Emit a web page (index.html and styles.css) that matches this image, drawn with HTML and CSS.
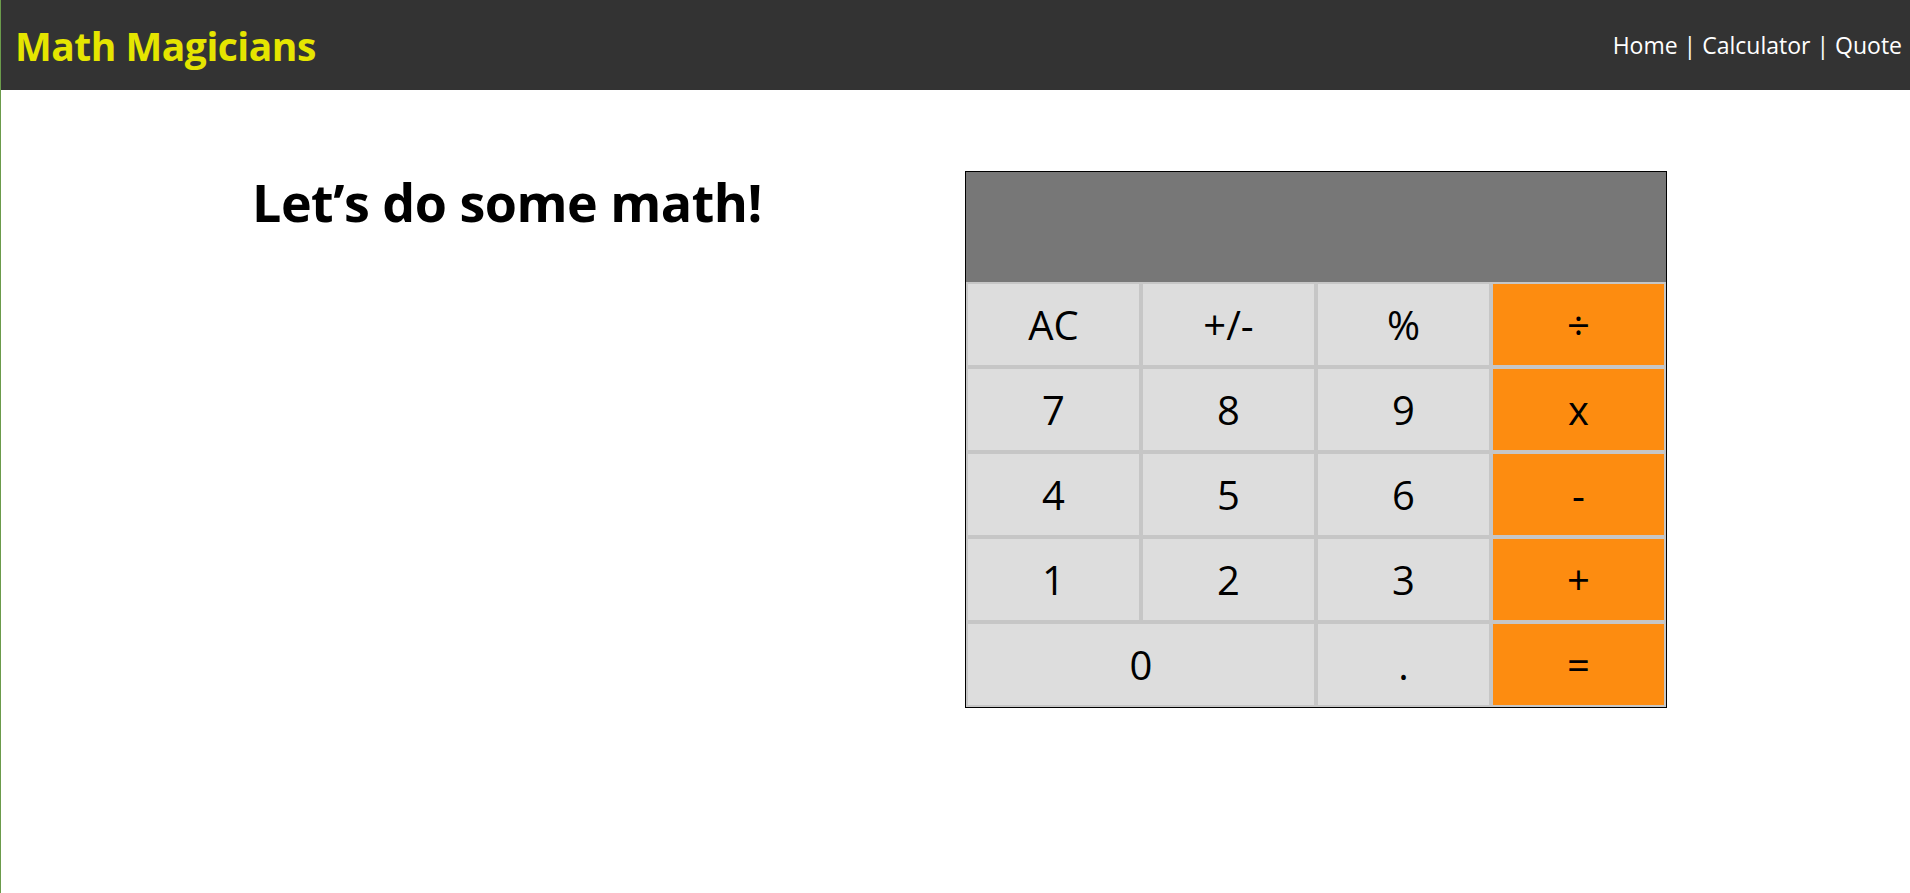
FILE: index.html
```html
<!DOCTYPE html>
<html lang="en">
<head>
<meta charset="utf-8">
<title>Math Magicians</title>
<link rel="stylesheet" href="styles.css">
</head>
<body>
<div class="app">
  <header class="topbar">
    <h1 class="brand">Math Magicians</h1>
    <nav class="nav">
      <a href="#" class="nav-link">Home</a> | <a href="#" class="nav-link">Calculator</a> | <a href="#" class="nav-link">Quote</a>
    </nav>
  </header>
  <main class="page">
    <h2 class="title">Let’s do some math!</h2>
    <div class="calc">
      <div class="display"></div>
      <div class="keys">
        <button class="key">AC</button>
        <button class="key">+/-</button>
        <button class="key">%</button>
        <button class="key op">÷</button>
        <button class="key">7</button>
        <button class="key">8</button>
        <button class="key">9</button>
        <button class="key op">x</button>
        <button class="key">4</button>
        <button class="key">5</button>
        <button class="key">6</button>
        <button class="key op">-</button>
        <button class="key">1</button>
        <button class="key">2</button>
        <button class="key">3</button>
        <button class="key op">+</button>
        <button class="key zero">0</button>
        <button class="key">.</button>
        <button class="key op">=</button>
      </div>
    </div>
  </main>
</div>
</body>
</html>
```
FILE: styles.css
```css
* { box-sizing: border-box; }
html, body { margin: 0; padding: 0; background: #fff; }
body { font-family: "Open Sans", "Noto Sans", sans-serif; }

.app {
  min-height: 100vh;
  border-left: 1px solid #6b9b4b;
}

.topbar {
  height: 90px;
  background: #333333;
  display: flex;
  align-items: center;
  justify-content: space-between;
  padding: 0 8px 0 14px;
}

.brand {
  margin: 0;
  color: #e5e500;
  font-size: 39px;
  font-weight: 700;
  letter-spacing: -0.5px;
}

.nav {
  color: #fff;
  font-size: 23px;
}

.nav-link { color: #fff; text-decoration: none; }

.page {
  display: flex;
  justify-content: space-between;
  align-items: flex-start;
  padding: 81px 243px 0 251px;
}

.title {
  margin: 0;
  font-size: 52px;
  font-weight: 700;
  line-height: 1.2;
  color: #000;
  letter-spacing: -0.5px;
}

.calc {
  width: 702px;
  border: 1px solid #000;
  background: #c6c6c6;
}

.display {
  height: 110px;
  background: #777777;
}

.keys {
  display: grid;
  grid-template-columns: repeat(4, 1fr);
}

.key {
  height: 85px;
  border: 2px solid #c6c6c6;
  background: #dddddd;
  font-family: "Open Sans", "Noto Sans", sans-serif;
  font-size: 40px;
  color: #000;
  padding: 0;
}

.key.op { background: #fd8c10; }
.key.zero { grid-column: span 2; }
```
